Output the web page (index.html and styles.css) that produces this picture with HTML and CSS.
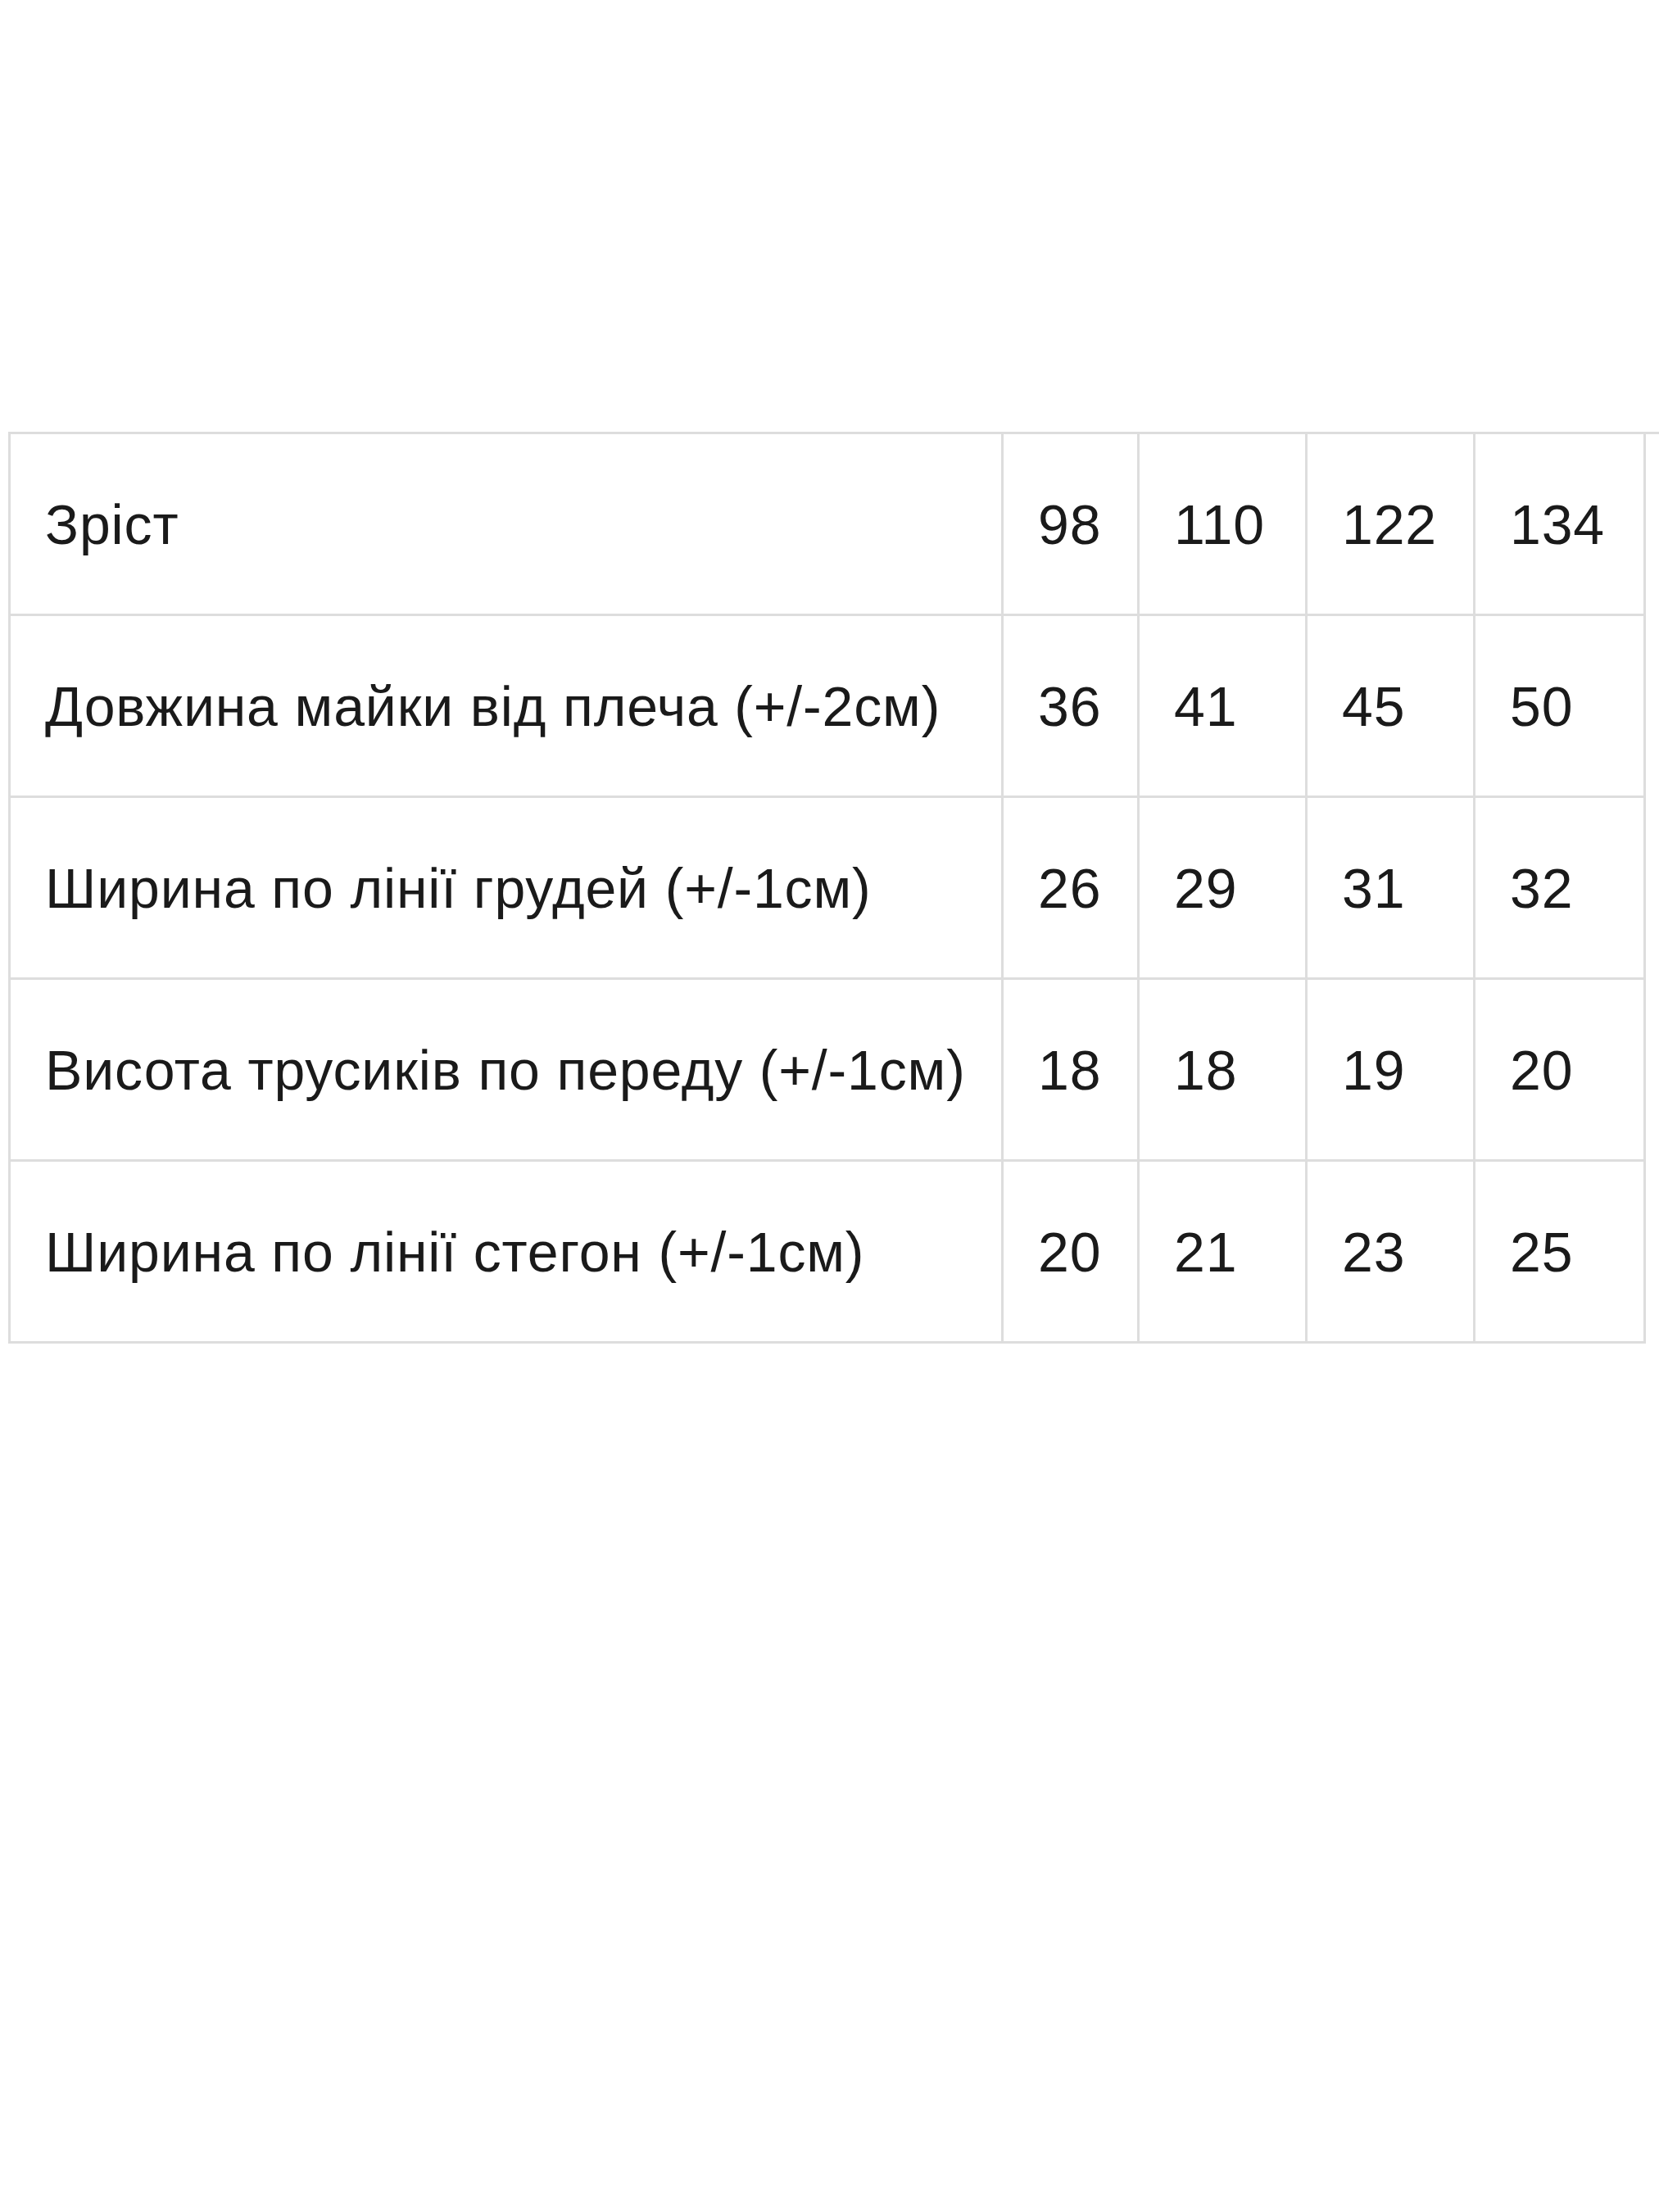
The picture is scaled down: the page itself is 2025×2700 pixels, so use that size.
FILE: index.html
```html
<!DOCTYPE html>
<html lang="uk">
<head>
<meta charset="utf-8">
<title>Розмірна сітка</title>
<link rel="stylesheet" href="styles.css">
</head>
<body>
<main class="page">
  <table class="size-table">
    <colgroup>
      <col class="col-label">
      <col class="col-s1">
      <col class="col-s2">
      <col class="col-s3">
      <col class="col-s4">
      <col class="col-extra">
    </colgroup>
    <tbody>
      <tr>
        <td>Зріст</td>
        <td>98</td>
        <td>110</td>
        <td>122</td>
        <td>134</td>
        <td class="cut"></td>
      </tr>
      <tr>
        <td>Довжина майки від плеча (+/-2см)</td>
        <td>36</td>
        <td>41</td>
        <td>45</td>
        <td>50</td>
      </tr>
      <tr>
        <td>Ширина по лінії грудей (+/-1см)</td>
        <td>26</td>
        <td>29</td>
        <td>31</td>
        <td>32</td>
      </tr>
      <tr>
        <td>Висота трусиків по переду (+/-1см)</td>
        <td>18</td>
        <td>18</td>
        <td>19</td>
        <td>20</td>
      </tr>
      <tr>
        <td>Ширина по лінії стегон (+/-1см)</td>
        <td>20</td>
        <td>21</td>
        <td>23</td>
        <td>25</td>
      </tr>
    </tbody>
  </table>
</main>
</body>
</html>
```

FILE: styles.css
```css
html, body {
  margin: 0;
  padding: 0;
  background: #ffffff;
  overflow: hidden;
}

.page {
  padding: 527px 0 0 10px;
  font-family: "Liberation Sans", Arial, sans-serif;
  color: #1a1a1a;
}

.size-table {
  border-collapse: collapse;
  table-layout: fixed;
  width: 2013px;
}

.col-label { width: 1212px; }
.col-s1 { width: 166px; }
.col-s2 { width: 205px; }
.col-s3 { width: 205px; }
.col-s4 { width: 208px; }
.col-extra { width: 17px; }

.size-table td {
  border: 3px solid #dddddd;
  height: 219px;
  padding: 0 0 0 42px;
  font-size: 68px;
  line-height: 78px;
  letter-spacing: 0.85px;
  vertical-align: middle;
  white-space: nowrap;
  text-align: left;
}

.size-table td.cut {
  padding: 0;
  border-right: 0;
  border-bottom: 0;
}
```
